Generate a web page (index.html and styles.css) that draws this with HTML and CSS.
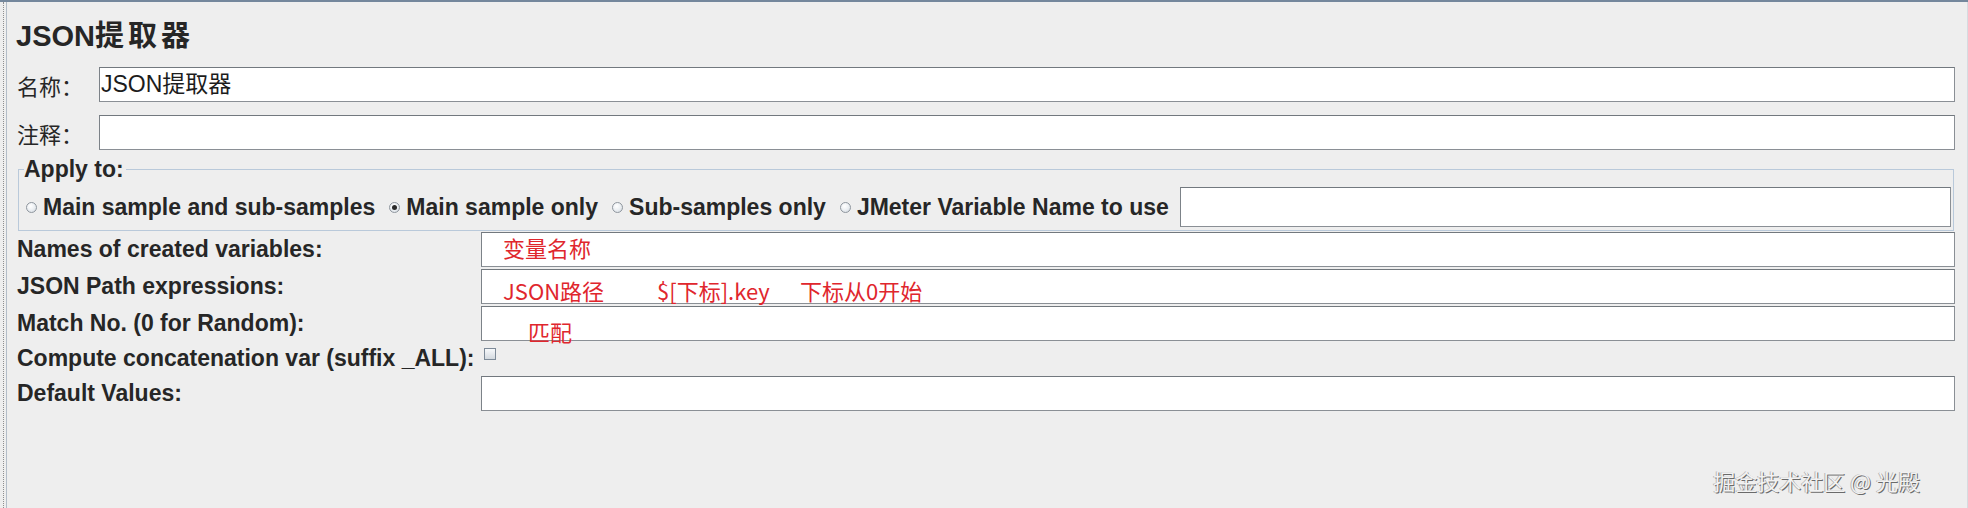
FILE: index.html
```html
<!DOCTYPE html>
<html lang="zh-CN">
<head>
<meta charset="utf-8">
<title>JSON提取器</title>
<link rel="stylesheet" href="styles.css">
</head>
<body>
<div class="frame">
  <div class="rail">
    <div class="panel">
      <h1 class="title">JSON<span class="title-cjk">提取器</span></h1>

      <div class="field-row">
        <span class="cjk-label">名称：</span>
        <div class="text-box name-box">JSON提取器</div>
      </div>
      <div class="field-row">
        <span class="cjk-label">注释：</span>
        <div class="text-box"></div>
      </div>

      <fieldset class="apply">
        <legend>Apply to:</legend>
        <div class="radio-row">
          <span class="radio"></span><span class="radio-text">Main sample and sub-samples</span>
          <span class="radio checked"></span><span class="radio-text">Main sample only</span>
          <span class="radio"></span><span class="radio-text">Sub-samples only</span>
          <span class="radio"></span><span class="radio-text last">JMeter Variable Name to use</span>
          <div class="text-box var-box"></div>
        </div>
      </fieldset>

      <div class="grid">
        <div class="label">Names of created variables:</div>
        <div class="text-box note-box pad-names">变量名称</div>

        <div class="label">JSON Path expressions:</div>
        <div class="text-box note-box pad-path"><span class="seg seg-a">JSON路径</span><span class="seg seg-b">$[下标].key</span><span class="seg">下标从0开始</span></div>

        <div class="label">Match No. (0 for Random):</div>
        <div class="text-box note-box pad-match">匹配</div>

        <div class="label">Compute concatenation var (suffix _ALL):</div>
        <div class="check-cell"><span class="check"></span></div>

        <div class="label">Default Values:</div>
        <div class="text-box"></div>
      </div>
    </div>
  </div>
  <div class="watermark">掘金技术社区 @ 光殿</div>
</div>
</body>
</html>
```

FILE: styles.css
```css
* { box-sizing: border-box; }

html, body {
  margin: 0;
  padding: 0;
}

body {
  width: 1968px;
  height: 508px;
  overflow: hidden;
  background: #eeeeee;
  color: #262626;
  font-family: "Liberation Sans", "Noto Sans CJK SC", sans-serif;
}

.frame {
  position: relative;
  height: 508px;
  border-top: 2px solid #74879c;
}

.rail {
  height: 100%;
  margin-left: 3px;
  border-left: 1px dotted #8e8e8e;
}

.panel {
  height: 100%;
  margin-left: 2px;
  border-left: 1px solid #b3bdc8;
  border-right: 1px solid #d6dbe0;
  padding: 13px 12px 0 10px;
}

.title {
  margin: 0 0 0 -1px;
  height: 36px;
  font-size: 29px;
  line-height: 36px;
  font-weight: bold;
  white-space: nowrap;
}

.title-cjk {
  font-family: "Noto Sans CJK SC", sans-serif;
  letter-spacing: 4px;
  line-height: 36px;
}

.field-row {
  display: flex;
  align-items: center;
  margin-top: 16px;
}

.field-row + .field-row {
  margin-top: 13px;
}

.cjk-label {
  width: 82px;
  flex: none;
  font-family: "Noto Sans CJK SC", sans-serif;
  font-size: 22px;
  line-height: 30px;
}

.text-box {
  flex: 1;
  min-width: 0;
  height: 35px;
  background: #ffffff;
  border: 1px solid #8a8f95;
  border-top-color: #72787e;
  border-left-color: #7c8288;
}

.name-box {
  padding-left: 1px;
  font-size: 23px;
  line-height: 33px;
  color: #1c1c1c;
  white-space: nowrap;
}

.apply {
  margin: 6px 1px 0 1px;
  padding: 5px 2px 3px 5px;
  border: 1px solid #b9c9da;
  min-width: 0;
}

.apply legend {
  padding: 0 2px 0 0;
  font-size: 23px;
  line-height: 26px;
  font-weight: bold;
}

.radio-row {
  display: flex;
  align-items: center;
  height: 40px;
  padding-left: 2px;
  font-size: 23px;
  font-weight: bold;
}

.radio {
  position: relative;
  flex: none;
  width: 11px;
  height: 11px;
  margin-right: 6px;
  border-radius: 50%;
  border: 1px solid #8f969e;
  background: radial-gradient(circle at 40% 35%, #ffffff 0%, #eef1f4 45%, #cfd6dd 100%);
}

.radio.checked::after {
  content: "";
  position: absolute;
  left: 2px;
  top: 2px;
  width: 5px;
  height: 5px;
  border-radius: 50%;
  background: #2a2a2a;
}

.radio-text {
  margin-right: 14px;
  white-space: nowrap;
}

.radio-text.last {
  margin-right: 11px;
}

.var-box {
  height: 40px;
}

.grid {
  display: grid;
  grid-template-columns: 464px 1fr;
  grid-template-rows: 35px 35px 35px 31px 35px;
  row-gap: 2px;
  margin-top: 1px;
  align-items: center;
}

.label {
  font-size: 23px;
  font-weight: bold;
  white-space: nowrap;
}

.check-cell {
  align-self: stretch;
}

.check {
  display: block;
  width: 12px;
  height: 12px;
  margin: 5px 0 0 3px;
  border: 1px solid #7d8a98;
  background: linear-gradient(#f7f9fb, #d3d9df);
}

.note-box {
  color: #e0262d;
  font-family: "Noto Sans CJK SC", sans-serif;
  font-size: 22px;
  line-height: 22px;
  white-space: nowrap;
}

.pad-names { padding: 3px 0 0 21px; }
.pad-path { padding: 9px 0 0 21px; }
.pad-match { padding: 13px 0 0 46px; }

.seg { display: inline-block; }
.seg-a { width: 154px; }
.seg-b { width: 143px; }

.watermark {
  position: absolute;
  right: 48px;
  top: 465px;
  font-family: "Noto Sans CJK SC", sans-serif;
  font-size: 22px;
  line-height: 26px;
  color: #f2f2f2;
  text-shadow: 1px 1px 0 #6a6a6a, -1px 0 0 #b5b5b5;
  white-space: nowrap;
}
```
